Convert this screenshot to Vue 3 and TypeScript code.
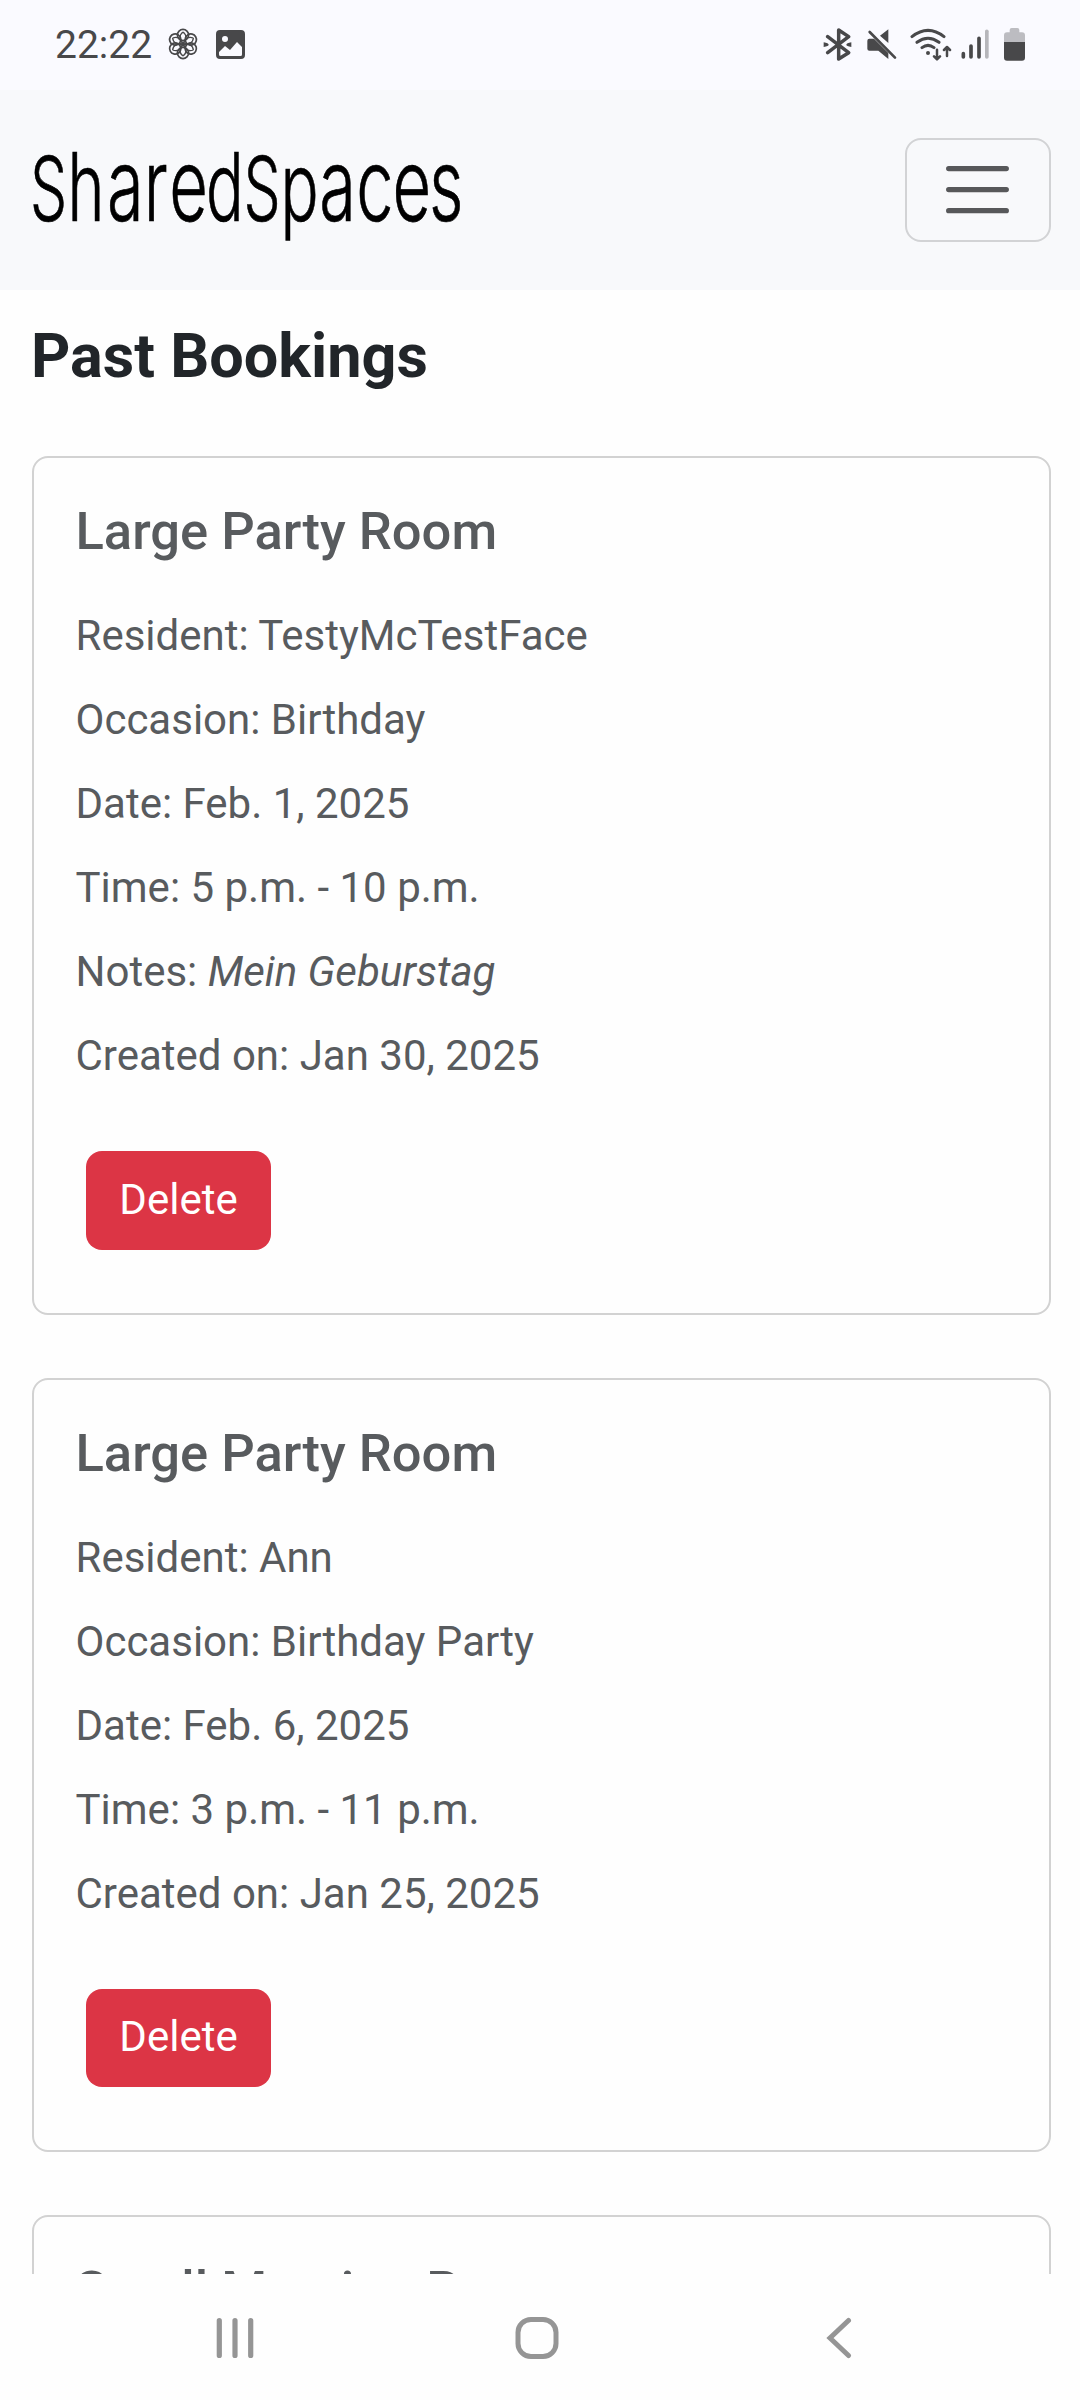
<script setup lang="ts">
interface Row {
  label: string
  value: string
  italic?: boolean
}
interface Booking {
  room: string
  rows: Row[]
}

const bookings: Booking[] = [
  {
    room: 'Large Party Room',
    rows: [
      { label: 'Resident', value: 'TestyMcTestFace' },
      { label: 'Occasion', value: 'Birthday' },
      { label: 'Date', value: 'Feb. 1, 2025' },
      { label: 'Time', value: '5 p.m. - 10 p.m.' },
      { label: 'Notes', value: 'Mein Geburstag', italic: true },
      { label: 'Created on', value: 'Jan 30, 2025' },
    ],
  },
  {
    room: 'Large Party Room',
    rows: [
      { label: 'Resident', value: 'Ann' },
      { label: 'Occasion', value: 'Birthday Party' },
      { label: 'Date', value: 'Feb. 6, 2025' },
      { label: 'Time', value: '3 p.m. - 11 p.m.' },
      { label: 'Created on', value: 'Jan 25, 2025' },
    ],
  },
  { room: 'Small Meeting Room', rows: [] },
]

const petals = [0, 60, 120, 180, 240, 300]

// the wordmark is set as one condensed line; each letter has its own left edge
const squeeze = 0.66
const wordmark = [
  { ch: 'S', x: 30, size: 89 },
  { ch: 'h', x: 67.4, size: 95 },
  { ch: 'a', x: 107, size: 101 },
  { ch: 'r', x: 143.8, size: 101 },
  { ch: 'e', x: 169.3, size: 101 },
  { ch: 'd', x: 206, size: 95 },
  { ch: 'S', x: 243.4, size: 89 },
  { ch: 'p', x: 280.4, size: 96 },
  { ch: 'a', x: 319.2, size: 101 },
  { ch: 'c', x: 356.2, size: 101 },
  { ch: 'e', x: 392.4, size: 101 },
  { ch: 's', x: 429, size: 101 },
]
</script>

<template>
  <div class="screen">
    <div class="status">
      <span class="clock">22:22</span>
      <svg class="flower" width="32" height="32" viewBox="-16 -16 32 32">
        <g fill="none" stroke="#48484a" stroke-width="1.7">
          <circle v-for="a in petals" :key="a" cx="0" cy="-9" r="5.6" :transform="`rotate(${a})`" />
          <path v-for="a in petals" :key="'p' + a" d="M0 0C-4-4-4-9 0-12M0 0C4-4 4-9 0-12" stroke-width="1.3" :transform="`rotate(${a})`" />
        </g>
      </svg>
      <svg class="photo" width="29" height="29" viewBox="0 0 29 29">
        <path fill="#48484a" fill-rule="evenodd" d="M4 0H25Q29 0 29 4V25Q29 29 25 29H4Q0 29 0 25V4Q0 0 4 0ZM9 6A3 3 0 1 0 9 12A3 3 0 1 0 9 6ZM3 22V24.5Q3 26 4.500 26H24.500Q26 26 26 24.500V17L21 12L14 20L9 16Z" />
      </svg>
      <div class="spacer"></div>
      <svg class="bt" width="29" height="33" viewBox="69 54 87 99">
        <path d="M83 80L146 128L116 147V60L146 80L83 128" fill="none" stroke="#48484a" stroke-width="10.500" stroke-linecap="round" stroke-linejoin="round" />
        <path d="M71 97Q86 100 86 104Q86 108 71 111ZM154 97Q139 100 139 104Q139 108 154 111Z" fill="#48484a" />
      </svg>
      <svg class="mute" width="30" height="31" viewBox="201 57 90 93">
        <path d="M208 86H222L265 129V147L235 122H208Q202 122 202 116V92Q202 86 208 86ZM265 58V99L240 77Z" fill="#48484a" />
        <path d="M209 66L285 143" stroke="#48484a" stroke-width="8" stroke-linecap="round" />
      </svg>
      <svg class="wifi" width="43" height="33" viewBox="330 54 129 99">
        <g fill="none" stroke="#48484a" stroke-width="9" stroke-linecap="round" stroke-linejoin="round">
          <path d="M336 80Q384 42 432 80M351 97Q384 73 417 97M366 113Q384 99 402 113" />
          <path d="M411 119V147M402 139L411 148L420 139M441 138V112M432 120L441 111L450 120" stroke-width="7.500" />
        </g>
        <circle cx="384" cy="129" r="6" fill="#48484a" />
      </svg>
      <svg class="signal" width="28" height="31" viewBox="483 58 84 93">
        <g stroke-width="11" stroke-linecap="round">
          <path d="M490 132V142M513 109V142M537 86V142" stroke="#48484a" />
          <path d="M560.500 65V142" stroke="#b6b6bb" />
        </g>
      </svg>
      <svg class="battery" width="21" height="33" viewBox="612 54 63 99">
        <path d="M612 98V76Q612 67 621 67H629V60Q629 54 635 54H652Q658 54 658 60V67H666Q675 67 675 76V98Z" fill="#bcbcc1" />
        <path d="M612 96H675V143Q675 152 666 152H621Q612 152 612 143Z" fill="#48484a" />
      </svg>
    </div>

    <header class="navbar">
      <svg class="brand" width="480" height="180" viewBox="0 0 480 180">
        <text :transform="`scale(${squeeze} 1)`" y="121.500"><tspan
          v-for="(l, i) in wordmark"
          :key="i"
          :x="l.x / squeeze"
          :font-size="l.size"
        >{{ l.ch }}</tspan></text>
      </svg>
      <button class="toggler" aria-label="Menu">
        <svg width="64" height="52" viewBox="0 0 64 52">
          <path d="M2.700 4.600H60.300M2.700 25.600H60.300M2.700 46.700H60.300" stroke="#57585a" stroke-width="5.300" stroke-linecap="round" />
        </svg>
      </button>
    </header>

    <main class="page">
      <h1>Past Bookings</h1>
      <section v-for="(b, i) in bookings" :key="i" class="card">
        <h5>{{ b.room }}</h5>
        <p v-for="r in b.rows" :key="r.label">{{ r.label }}: <em v-if="r.italic">{{ r.value }}</em><template v-else>{{ r.value }}</template></p>
        <button v-if="b.rows.length" class="delete">Delete</button>
      </section>
    </main>

    <nav class="sysnav">
      <svg width="38" height="42" viewBox="0 0 38 42">
        <path d="M3.300 3.500V38.500M19 3.500V38.500M34.700 3.500V38.500" stroke="#959595" stroke-width="5.200" stroke-linecap="round" />
      </svg>
      <svg class="home" width="44" height="42" viewBox="0 0 44 42">
        <rect x="3" y="2.500" width="38" height="37" rx="13" fill="none" stroke="#959595" stroke-width="5" />
      </svg>
      <svg width="26" height="42" viewBox="0 0 26 42">
        <path d="M22.500 3.500L4 21L22.500 38.500" fill="none" stroke="#959595" stroke-width="5" stroke-linecap="round" />
      </svg>
    </nav>
  </div>
</template>

<style>
body {
  margin: 0;
}
</style>

<style scoped>
.screen {
  width: 1080px;
  height: 2400px;
  display: flex;
  flex-direction: column;
  overflow: hidden;
  background: #fefefe;
  font-family: Roboto, "Liberation Sans", sans-serif;
}
.status {
  height: 90px;
  flex: none;
  display: flex;
  align-items: flex-start;
  background: #fafaff;
  box-sizing: border-box;
  padding: 28px 55px 0 55px;
}
.clock {
  font-size: 39px;
  line-height: 34px;
  width: 98px;
  color: #48484a;
}
.flower {
  margin: 0 0 0 14px;
}
.photo {
  margin: 2px 0 0 17px;
}
.spacer {
  flex: 1;
}
.mute {
  margin: 1px 0 0 15px;
}
.wifi {
  margin-left: 13px;
}
.signal {
  margin: 1px 0 0 8px;
}
.battery {
  margin-left: 15px;
}
.navbar {
  height: 200px;
  flex: none;
  display: flex;
  align-items: center;
  justify-content: space-between;
  background: #f8f9fb;
  box-sizing: border-box;
  padding-right: 29px;
}
.brand text {
  font-family: Inter, sans-serif;
  font-weight: 300;
  fill: #000;
  stroke: #000;
  stroke-width: 0.7px;
}
.toggler {
  width: 146px;
  height: 104px;
  box-sizing: border-box;
  border: 2px solid #d2d3d5;
  border-radius: 16px;
  background: transparent;
  padding: 0;
  display: flex;
  align-items: center;
  justify-content: center;
}
.page {
  flex: 1;
  min-height: 0;
  overflow: hidden;
  padding: 28.400px 29px 0 32px;
}
h1 {
  margin: 0 0 62px -1px;
  font-size: 61.200px;
  line-height: 76px;
  font-weight: 700;
  color: #212529;
}
.card {
  border: 2px solid #d2d2d2;
  border-radius: 16px;
  padding: 42px 42px 62.900px 41.500px;
  margin-bottom: 62.800px;
  color: #585b5e;
}
h5 {
  margin: 0 0 41px;
  font-size: 52.500px;
  line-height: 63px;
  font-weight: 500;
}
p {
  margin: 0 0 21px;
  font-size: 42px;
  line-height: 63px;
}
p:last-of-type {
  margin-bottom: 0;
}
.delete {
  display: block;
  margin: 64px 0 0 10.500px;
  width: 185px;
  height: 98.600px;
  border: 0;
  border-radius: 16px;
  background: #dc3545;
  color: #fff;
  font-family: inherit;
  font-size: 42px;
  line-height: 63px;
  padding: 0 0 2px;
}
.sysnav {
  height: 126px;
  flex: none;
  display: flex;
  align-items: center;
  justify-content: space-between;
  background: #fefefe;
  box-sizing: border-box;
  padding: 2px 228px 0 216px;
}
.home {
  margin-right: 7px;
}
</style>
